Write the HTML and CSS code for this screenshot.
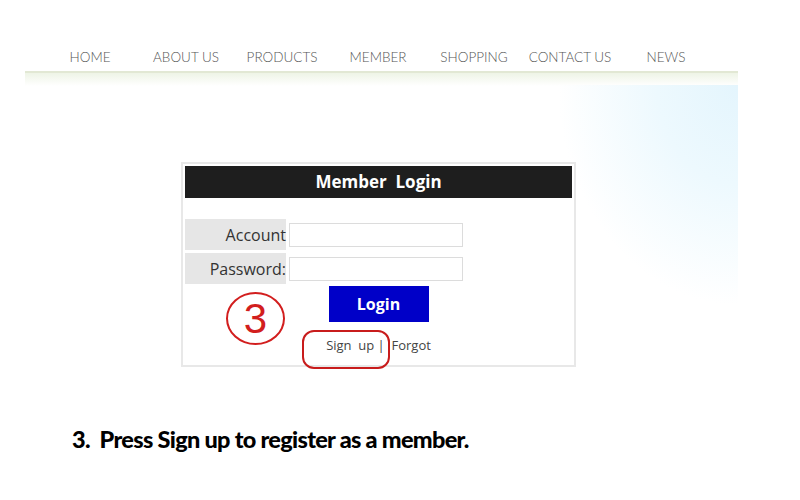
FILE: index.html
```html
<!DOCTYPE html>
<html lang="en">
<head>
    <meta charset="UTF-8">
    <meta name="viewport" content="width=device-width, initial-scale=1.0">
    <title>Member Login</title>
    <link rel="stylesheet" href="styles.css">
</head>
<body>
    <ul class="nav">
        <li>HOME</li>
        <li>ABOUT US</li>
        <li>PRODUCTS</li>
        <li>MEMBER</li>
        <li>SHOPPING</li>
        <li>CONTACT US</li>
        <li>NEWS</li>
    </ul>

    <div class="stage">
        <div class="login-box">
            <div class="login-title">Member&nbsp; Login</div>
            <div class="login-form">
                <label class="field-label">Account</label>
                <input class="field-input" type="text">
                <label class="field-label">Password:</label>
                <input class="field-input" type="password">
            </div>
            <button class="login-btn">Login</button>
            <div class="links">Sign&nbsp; up |&nbsp; Forgot</div>

            <!-- tutorial marks drawn over the form -->
            <div class="mark-step">3</div>
            <div class="mark-box"></div>
        </div>
    </div>

    <p class="caption">3.&nbsp; Press Sign up to register as a member.</p>
</body>
</html>
```

FILE: styles.css
```css
body {
    margin: 0;
    background: #fff;
    font-family: 'Open Sans', 'Noto Sans', sans-serif;
}
.nav {
    display: flex;
    list-style: none;
    margin: 0;
    padding: 48px 0 0 42px;
    height: 23px;
}
.nav li {
    width: 96px;
    text-align: center;
    font-family: 'Lato', sans-serif;
    font-weight: 300;
    font-size: 13.5px;
    line-height: 18px;
    color: #555;
}
.stage {
    width: 713px;
    margin-left: 25px;
    border-top: 2px solid #e2e8d4;
    padding: 89px 0 30px 156px;
    box-sizing: border-box;
    background:
        linear-gradient(#eef4e6, rgba(255, 255, 255, 0) 13px) top left / 100% 13px no-repeat,
        radial-gradient(ellipse 180px 220px at right top, #e4f5fd 0%, #edf9fe 45%, rgba(255, 255, 255, 0) 100%) right 12px / 200px 240px no-repeat;
}
.login-box {
    position: relative;
    width: 395px;
    box-sizing: border-box;
    border: 2px solid #e8e8e8;
    padding: 2px 2px 4px;
    background: #fff;
}
.login-title {
    background: #1e1e1e;
    color: #fff;
    font-weight: bold;
    font-size: 17px;
    line-height: 32px;
    text-align: center;
}
.login-form {
    display: grid;
    grid-template-columns: 101px 174px;
    grid-auto-rows: 31px;
    column-gap: 3px;
    row-gap: 3px;
    margin-top: 21px;
    align-items: center;
}
.field-label {
    height: 100%;
    background: #e6e6e6;
    color: #333;
    font-size: 16px;
    line-height: 33px;
    text-align: right;
}
.field-input {
    height: 24px;
    box-sizing: border-box;
    border: 1px solid #dcdcdc;
    margin: 0;
}
.login-btn {
    display: block;
    width: 100px;
    height: 36px;
    margin: 2px auto 0;
    border: none;
    background: #0000c8;
    color: #fff;
    font-family: inherit;
    font-weight: bold;
    font-size: 16px;
}
.links {
    text-align: center;
    font-size: 13px;
    color: #444;
    line-height: 20px;
    padding: 13px 0 6px;
}
.mark-step {
    position: absolute;
    left: 43px;
    top: 128px;
    width: 55px;
    height: 49px;
    border: 2px solid #d21e1e;
    border-radius: 50%;
    color: #d21e1e;
    font-family: 'Liberation Sans', sans-serif;
    font-size: 42px;
    line-height: 50px;
    text-align: center;
}
.mark-box {
    position: absolute;
    left: 119px;
    top: 166px;
    width: 84px;
    height: 35px;
    border: 2px solid #c81c1c;
    border-radius: 12px;
}
.caption {
    margin: 28px 0 0 72px;
    font-family: 'Lato', sans-serif;
    font-weight: 900;
    font-size: 23.5px;
    line-height: 28px;
    letter-spacing: -0.7px;
    color: #000;
}
```
